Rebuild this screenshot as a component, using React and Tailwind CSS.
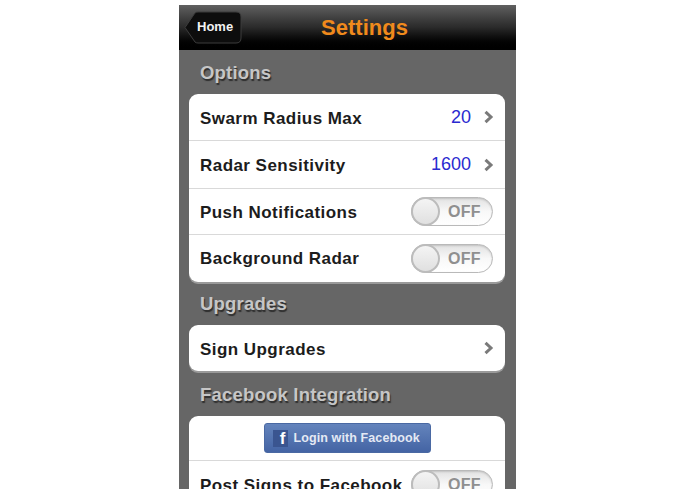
const sans = { fontFamily: '"Liberation Sans", Arial, sans-serif' };

const Chevron = () => (
  <svg width="11" height="14" viewBox="0 0 11 14" className="ml-[12px] mr-[-1px] shrink-0">
    <path d="M2.5 1.8 L8 7 L2.5 12.2" fill="none" stroke="#7a7a7a" strokeWidth="3" />
  </svg>
);

const Toggle = () => (
  <div className="relative w-[82px] h-[29px] rounded-full border border-[#b9b9b9] bg-gradient-to-b from-[#e2e2e2] via-[#f8f8f8] to-white shrink-0 shadow-[inset_0_1px_2px_rgba(0,0,0,0.15)]">
    <div className="absolute left-[-1px] top-[-1px] w-[29px] h-[29px] rounded-full border-2 border-[#bcbcbc] bg-gradient-to-b from-[#f4f4f4] to-[#e0e0e0]" />
    <span className="absolute left-[36px] top-[4px] text-[16px] leading-[20px] font-bold text-[#8f8f8f] tracking-[0.3px]">OFF</span>
  </div>
);

const Row = ({ label, value, chevron, toggle, h, last, labelClass }) => (
  <div className={`flex items-center pl-[11px] pr-[12px] ${h} ${last ? "" : "border-b border-[#d9d9d9]"}`}>
    <span className={`flex-1 text-[17px] font-bold text-[#1c1c1c] tracking-[0.45px] ${labelClass}`}>{label}</span>
    {value && <span className="text-[18px] text-[#2a2ad0]">{value}</span>}
    {chevron && <Chevron />}
    {toggle && <Toggle />}
  </div>
);

const Section = ({ title, h }) => (
  <div className={`${h} flex items-center pl-[21px] text-[18.5px] font-bold text-[#c6c6c6] tracking-[0.2px] [text-shadow:1px_2px_1px_#2e2e2e]`}>
    {title}
  </div>
);

const Card = ({ children }) => (
  <div className="ml-[10px] mr-[11px] bg-white rounded-[9px] shadow-[0_2px_0_#9a9a9a]">{children}</div>
);

export default function App() {
  return (
    <div className="w-[695px] h-[494px] bg-white pt-[5px] pl-[179px]" style={sans}>
      <div className="w-[337px] h-[484px] bg-[#666666] overflow-hidden">
        {/* Nav bar */}
        <div className="relative h-[45px] flex items-center justify-center bg-gradient-to-b from-[#606060] via-[#2a2a2a] to-black">
          <svg width="58" height="33" viewBox="0 0 58 33" className="absolute left-[5px] top-[6px]">
            <path d="M1 16.5 L11 2 Q12 1 14 1 L52 1 Q57 1 57 6 L57 27 Q57 32 52 32 L14 32 Q12 32 11 31 Z" fill="#0d0d0d" stroke="#3c3c3c" />
          </svg>
          <span className="absolute left-[18px] top-[13px] text-[13px] leading-[18px] font-bold text-[#f2f2f2]">Home</span>
          <span className="text-[22px] font-bold text-[#f08a1c] relative left-[17px]">Settings</span>
        </div>

        <Section title="Options" h="h-[44px] pt-[1px]" />
        <Card>
          <Row label="Swarm Radius Max" value="20" chevron h="h-[47px]" labelClass="pt-[3px]" />
          <Row label="Radar Sensitivity" value="1600" chevron h="h-[48px]" labelClass="pt-[2px]" />
          <Row label="Push Notifications" toggle h="h-[46px]" labelClass="pt-[2px]" />
          <Row label="Background Radar" toggle h="h-[47px]" last />
        </Card>

        <Section title="Upgrades" h="h-[43px] pt-[1px]" />
        <Card>
          <Row label="Sign Upgrades" chevron h="h-[46px]" last labelClass="pt-[3px]" />
        </Card>

        <Section title="Facebook Integration" h="h-[45px] pt-[3px]" />
        <Card>
          <div className="h-[45px] flex items-center justify-center border-b border-[#d9d9d9]">
            <div className="w-[167px] h-[30px] rounded-[3px] border border-[#4a69a3] bg-gradient-to-b from-[#6484bc] to-[#4464a4] flex items-center pl-[8px]">
              <div className="w-[15px] h-[17px] bg-[#3a5590] flex items-end justify-end pr-[2px]">
                <span className="text-[17px] leading-[17px] font-bold text-white">f</span>
              </div>
              <span className="ml-[6px] text-[12.5px] font-bold text-[#e4e9f4] tracking-[0.1px]">Login with Facebook</span>
            </div>
          </div>
          <Row label="Post Signs to Facebook" toggle h="h-[47px]" last labelClass="pt-[2px]" />
        </Card>
      </div>
    </div>
  );
}
